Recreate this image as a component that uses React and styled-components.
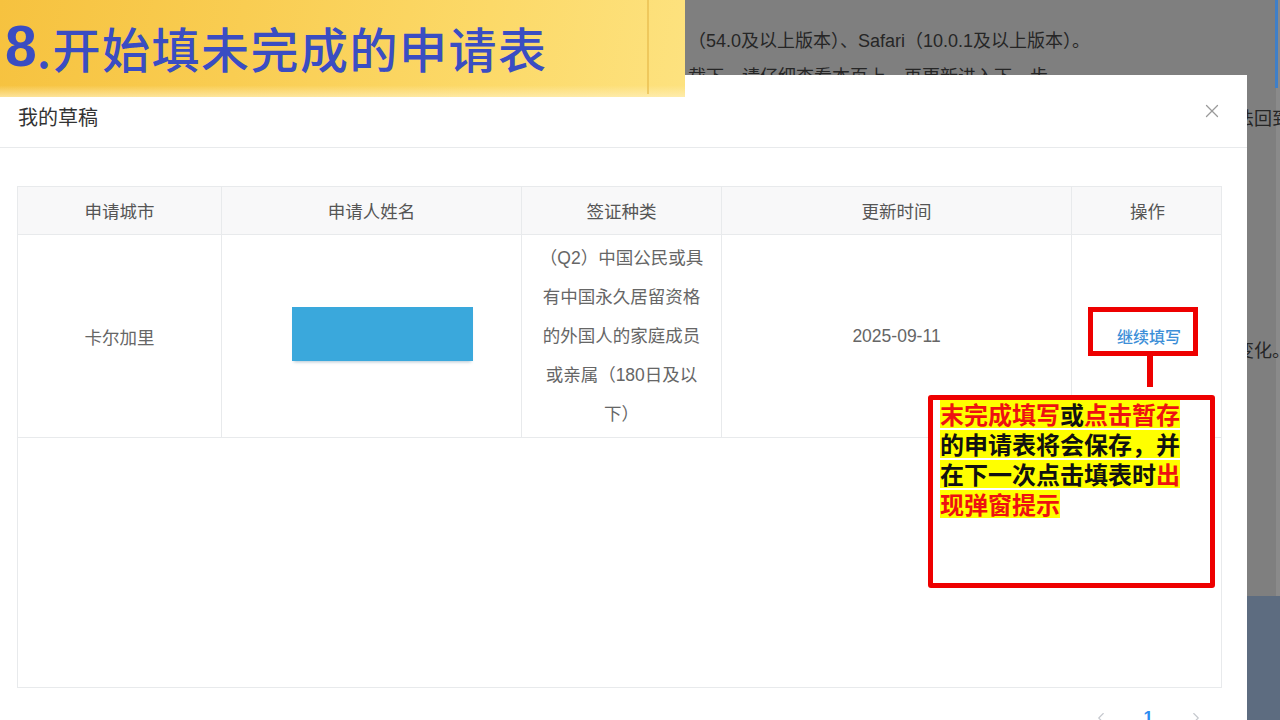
import React from 'react'
import styled, { createGlobalStyle } from 'styled-components'
import { X, ChevronLeft, ChevronRight } from 'lucide-react'

const GlobalStyle = createGlobalStyle`
  html, body {
    margin: 0;
    padding: 0;
    background: #7f7f7f;
  }
  body {
    font-family: "Liberation Sans", "Noto Sans CJK SC", sans-serif;
  }
  * {
    box-sizing: border-box;
  }
`

const columns = '204px 300px 200px 350px 151px'

const Stage = styled.div`
  position: relative;
  width: 1280px;
  height: 720px;
  overflow: hidden;
  background: #7f7f7f;
  display: flex;
  flex-direction: column;
`

const BackPage = styled.div`
  flex: 1;
  padding: 28px 0 0 688px;
  display: flex;
  flex-direction: column;
  color: #262626;
  font-size: 18px;
  border-right: 4px solid #8a8a8a;
`

const BackLine = styled.div`
  height: 26px;
  line-height: 26px;
  white-space: nowrap;
  margin-top: ${p => p.$gap || 0}px;
  text-align: ${p => p.$right ? 'right' : 'left'};
  margin-right: ${p => p.$right ? '-14px' : '0'};
`

const BackFooter = styled.div`
  height: 124px;
  flex-shrink: 0;
  background: #5d6c80;
`

const ScrollMark = styled.div`
  position: absolute;
  top: 0;
  right: 2px;
  width: 3px;
  height: 88px;
  background: #3f7fc8;
`

const Banner = styled.div`
  position: absolute;
  top: 0;
  left: 0;
  width: 685px;
  height: 97px;
  z-index: 3;
  display: flex;
  align-items: center;
  padding: 0 0 4px 5px;
  background:
    linear-gradient(to bottom, rgba(255,255,255,0) 88%, rgba(255,240,190,0.7) 100%),
    linear-gradient(100deg, #f6c23f 0%, #f9cd52 35%, #fcd968 70%, #fde27f 100%);

  &::after {
    content: '';
    position: absolute;
    top: 0;
    bottom: 3px;
    left: 647px;
    width: 2px;
    background: rgba(232, 190, 80, 0.7);
  }
`

const TitleNum = styled.span`
  font-family: "Liberation Sans", sans-serif;
  font-weight: 700;
  font-size: 57px;
  color: #3a4dc2;
  line-height: 1;
`

const TitleText = styled.span`
  font-family: "Noto Sans CJK SC", sans-serif;
  font-weight: 500;
  font-size: 48px;
  color: #3a4dc2;
  line-height: 1;
  letter-spacing: 1.5px;
`

const Modal = styled.div`
  position: absolute;
  top: 75px;
  left: 0;
  width: 1247px;
  bottom: 0;
  z-index: 2;
  background: #fff;
  overflow: hidden;
  display: flex;
  flex-direction: column;

  & > * {
    flex-shrink: 0;
  }
`

const ModalHeader = styled.div`
  height: 73px;
  padding: 30px 18px 0;
  border-bottom: 1px solid #e8eaec;
  display: flex;
  justify-content: space-between;
  align-items: flex-start;
`

const ModalTitle = styled.div`
  font-family: "Noto Sans CJK SC", sans-serif;
  font-size: 20px;
  line-height: 24px;
  color: #333;
`

const CloseBtn = styled.div`
  margin-top: -5px;
  margin-right: 6px;
  color: #9a9a9a;
  display: flex;
`

const ModalBody = styled.div`
  position: relative;
  padding: 38px 25px 0 17px;
`

const Table = styled.div`
  width: 1205px;
  height: 502px;
  border: 1px solid #e8eaec;
  display: flex;
  flex-direction: column;
`

const Row = styled.div`
  display: grid;
  flex-shrink: 0;
  grid-template-columns: ${columns};
  height: ${p => p.$head ? 48 : 203}px;
  background: ${p => p.$head ? '#f8f8f9' : '#fff'};
  border-bottom: 1px solid #e8eaec;
`

const Cell = styled.div`
  display: flex;
  align-items: center;
  justify-content: center;
  text-align: center;
  padding: 0 17px;
  font-size: 17.5px;
  color: ${p => p.$head ? '#555' : '#666'};
  border-right: ${p => p.$last ? 'none' : '1px solid #e8eaec'};
`

const VisaText = styled.div`
  line-height: 39px;
`

const Redacted = styled.div`
  width: 181px;
  height: 54px;
  margin: 0 0 5px 22px;
  background: #3aa8dc;
  box-shadow: 0 3px 3px -2px rgba(60, 110, 140, 0.4);
`

const LinkText = styled.span`
  color: #3d8fd8;
  font-size: 16px;
  font-weight: 500;
  margin-left: 3px;
`

const HighlightBox = styled.div`
  position: absolute;
  top: 159px;
  left: 1088px;
  width: 110px;
  height: 49px;
  border: 5px solid #ee0000;
`

const Stem = styled.div`
  position: absolute;
  top: 208px;
  left: 1147px;
  width: 6px;
  height: 31px;
  background: #ee0000;
`

const Callout = styled.div`
  position: absolute;
  top: 247px;
  left: 928px;
  width: 287px;
  height: 193px;
  border: 5px solid #ee0000;
  border-radius: 3px;
  background: #fff;
  padding: 0 0 0 7px;
  display: flex;
  flex-direction: column;
  gap: 2px;
`

const NoteLine = styled.div`
  width: fit-content;
  height: 28px;
  line-height: 28px;
  background: #ffff00;
  font-family: "Noto Sans CJK SC", serif;
  font-weight: 600;
  font-size: 24px;
  color: #111;
  white-space: nowrap;
`

const Red = styled.span`
  color: #ee1111;
`

const Pager = styled.div`
  display: flex;
  justify-content: flex-end;
  align-items: center;
  gap: 34px;
  padding: 20px 42px 0 0;
  color: #c5c8ce;
`

const PageNum = styled.span`
  color: #2d8cf0;
  font-weight: 700;
  font-size: 17px;
`

function App() {
  return (
    <>
      <GlobalStyle />
      <Stage>
        <BackPage>
          <BackLine>（54.0及以上版本）、Safari（10.0.1及以上版本）。</BackLine>
          <BackLine $gap={10}>载下，请仔细查看本页上，再更新进入下一步。</BackLine>
          <BackLine $gap={16} $right>将无法回到</BackLine>
          <BackLine $gap={206} $right>发生变化。</BackLine>
        </BackPage>
        <BackFooter />
        <ScrollMark />

        <Banner>
          <TitleNum>8</TitleNum>
          <TitleText>.开始填未完成的申请表</TitleText>
        </Banner>

        <Modal>
          <ModalHeader>
            <ModalTitle>我的草稿</ModalTitle>
            <CloseBtn><X size={22} strokeWidth={1.4} /></CloseBtn>
          </ModalHeader>
          <ModalBody>
            <Table>
              <Row $head>
                <Cell $head>申请城市</Cell>
                <Cell $head>申请人姓名</Cell>
                <Cell $head>签证种类</Cell>
                <Cell $head>更新时间</Cell>
                <Cell $head $last>操作</Cell>
              </Row>
              <Row>
                <Cell>卡尔加里</Cell>
                <Cell><Redacted /></Cell>
                <Cell>
                  <VisaText>（Q2）中国公民或具有中国永久居留资格的外国人的家庭成员或亲属（180日及以下）</VisaText>
                </Cell>
                <Cell>2025-09-11</Cell>
                <Cell $last><LinkText>继续填写</LinkText></Cell>
              </Row>
            </Table>

            <HighlightBox />
            <Stem />
            <Callout>
              <NoteLine><Red>末完成填写</Red>或<Red>点击暂存</Red></NoteLine>
              <NoteLine>的申请表将会保存，并</NoteLine>
              <NoteLine>在下一次点击填表时<Red>出</Red></NoteLine>
              <NoteLine><Red>现弹窗提示</Red></NoteLine>
            </Callout>
          </ModalBody>
          <Pager>
            <ChevronLeft size={18} strokeWidth={1.5} />
            <PageNum>1</PageNum>
            <ChevronRight size={18} strokeWidth={1.5} />
          </Pager>
        </Modal>
      </Stage>
    </>
  )
}

export default App
